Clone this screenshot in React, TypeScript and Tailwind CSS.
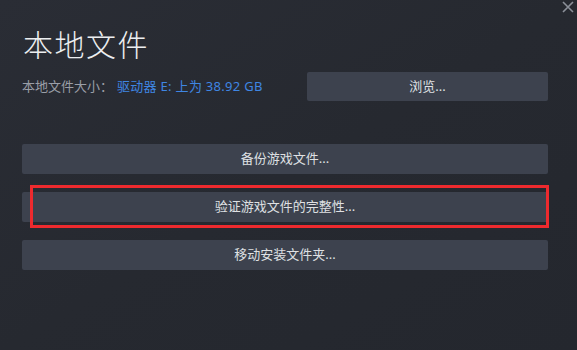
import * as React from "react";

const actions = ["备份游戏文件...", "验证游戏文件的完整性...", "移动安装文件夹..."];

function ActionButton({ label }: { label: string }) {
  return (
    <button className="flex h-[30px] w-full items-center justify-center rounded-[2px] bg-[#3d424e] text-[13px] text-[#dfe0e3]">
      {label}
    </button>
  );
}

export default function App() {
  return (
    <div
      className="relative h-[350px] w-[577px] overflow-hidden bg-gradient-to-br from-[#2a2d35] via-[#262930] to-[#24272e] pl-[22px] pr-[29px] pt-[27px]"
      style={{ fontFamily: '"Noto Sans", "Noto Sans CJK SC", sans-serif' }}
    >
      {/* close */}
      <svg
        className="absolute right-[3px] top-[1px] h-[12px] w-[12px] text-[#8b9099]"
        viewBox="0 0 12 12"
        fill="none"
        stroke="currentColor"
        strokeWidth="1.6"
      >
        <path d="M1 1L11 11M11 1L1 11" />
      </svg>

      <h1 className="ml-[1px] text-[30px] font-light leading-[36px] tracking-[1.5px] text-[#eceef0]">本地文件</h1>

      <div className="mt-[9px] flex items-center">
        <div className="flex-1 text-[13px]">
          <span className="text-[#9a9ea7]">本地文件大小：</span>
          <span className="ml-[4px] tracking-[0.3px] text-[#3f86e3]">驱动器 E: 上为 38.92 GB</span>
        </div>
        <button className="flex h-[29px] w-[241px] items-center justify-center rounded-[2px] bg-[#3d424e] text-[13px] text-[#dfe0e3]">
          浏览...
        </button>
      </div>

      <div className="mt-[43px] flex flex-col gap-[18px]">
        {actions.map((a, i) => (
          <div key={a} className="relative">
            <ActionButton label={a} />
            {i === 1 && (
              <div className="pointer-events-none absolute bottom-[-6px] left-[8px] right-[-1px] top-[-7px] border-[3px] border-[#ee2a2e]" />
            )}
          </div>
        ))}
      </div>
    </div>
  );
}
